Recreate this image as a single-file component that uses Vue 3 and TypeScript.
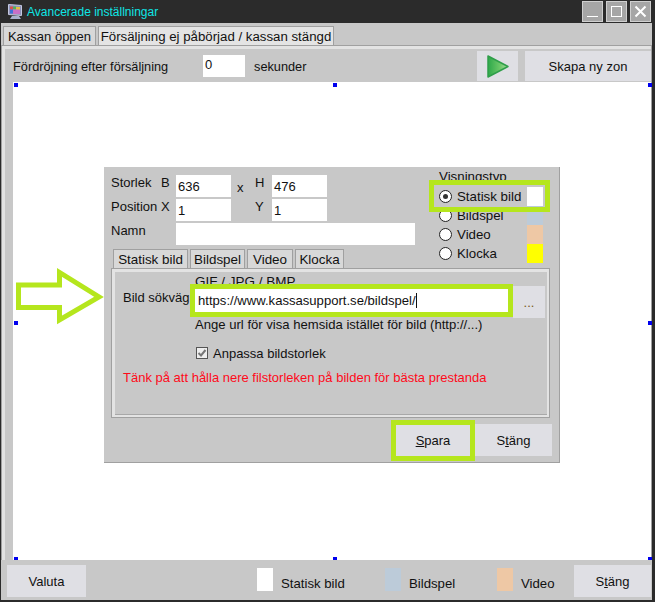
<script setup lang="ts">
interface Legend { label: string; color: string }
const legends: Legend[] = [
  { label: 'Statisk bild', color: '#ffffff' },
  { label: 'Bildspel', color: '#bccbd9' },
  { label: 'Video', color: '#eec8a5' },
];
const viewTypes = [
  { label: 'Statisk bild', color: '#ffffff', checked: true },
  { label: 'Bildspel', color: '#bccbd9', checked: false },
  { label: 'Video', color: '#eec8a5', checked: false },
  { label: 'Klocka', color: '#ffff00', checked: false },
];
const handles = ['tl', 'tc', 'tr', 'ml', 'mr', 'bl', 'bc', 'br'];
const innerTabs = ['Statisk bild', 'Bildspel', 'Video', 'Klocka'];
</script>

<template>
  <div class="window">
    <header class="titlebar">
      <svg class="appicon" width="14" height="15" viewBox="0 0 14 15">
        <path d="M0.5 0.5 L13.5 1.5 V11.5 L0.5 10.5 Z" fill="#8f93b8" stroke="#c4c8e0" />
        <rect x="2" y="2.5" width="3" height="3" fill="#d85050" />
        <rect x="5" y="2.5" width="3" height="3" fill="#50b060" />
        <rect x="8" y="3" width="4" height="3" fill="#e0c040" />
        <rect x="2" y="5.5" width="3" height="4" fill="#4070d8" />
        <rect x="5" y="5.5" width="7" height="4.5" fill="#c870c8" />
        <path d="M2 15 L4 12 H11 L13 15 Z" fill="#a8b0cc" />
      </svg>
      <span class="title">Avancerade inställningar</span>
      <div class="winbtns">
        <button class="winbtn"><svg width="21" height="21" viewBox="0 0 21 21"><rect x="5" y="15" width="11" height="1" fill="#fff" /></svg></button>
        <button class="winbtn"><svg width="21" height="21" viewBox="0 0 21 21"><rect x="5.5" y="5.5" width="10" height="10" fill="none" stroke="#fff" /></svg></button>
        <button class="winbtn"><svg width="21" height="21" viewBox="0 0 21 21"><path d="M5.5 5.5 L15.5 15.5 M15.5 5.5 L5.5 15.5" stroke="#fff" stroke-width="2" /></svg></button>
      </div>
    </header>

    <nav class="tabs">
      <span class="tab small">Kassan öppen</span>
      <span class="tab wide">Försäljning ej påbörjad / kassan stängd</span>
    </nav>

    <section class="body">
      <div class="toolbar">
        <span class="delay-label">Fördröjning efter försäljning</span>
        <span class="delay-input">0</span>
        <span class="delay-unit">sekunder</span>
        <button class="btn play">
          <svg width="24" height="25" viewBox="0 0 24 25">
            <defs>
              <linearGradient id="pg" x1="0" y1="0" x2="1" y2="0">
                <stop offset="0" stop-color="#2ea84a" />
                <stop offset="0.6" stop-color="#6cc868" />
                <stop offset="1" stop-color="#a6d8a0" />
              </linearGradient>
            </defs>
            <path d="M2 2 L22 12.5 L2 23 Z" fill="url(#pg)" stroke="#2f9e4a" stroke-width="1.5" stroke-linejoin="round" />
          </svg>
        </button>
        <button class="btn create">Skapa ny zon</button>
      </div>

      <div class="canvas">
        <i v-for="h in handles" :key="h" class="handle" :class="h"></i>

        <svg class="arrow" width="92" height="60" viewBox="0 0 92 60">
          <path d="M5.5 19 H46.5 V6.5 L86 31 L46.5 54 V41.5 H5.5 Z" fill="none" stroke="#b5e61d" stroke-width="5" />
        </svg>

        <div class="dialog">
          <div class="top">
            <div class="fields">
              <span class="lbl">Storlek</span><span class="lbl">B</span><span class="inp">636</span><span class="xmark">x</span><span class="lbl">H</span><span class="inp">476</span>
              <span class="lbl">Position</span><span class="lbl">X</span><span class="inp">1</span><span></span><span class="lbl">Y</span><span class="inp">1</span>
              <span class="namn lbl">Namn</span><span class="inp namn-inp"></span>
            </div>
            <div class="vis">
              <div class="vis-head">Visningstyp</div>
              <label v-for="v in viewTypes" :key="v.label" class="vis-row" :class="{ marked: v.checked }">
                <span class="radio" :class="{ on: v.checked }"></span>
                <span class="vis-label">{{ v.label }}</span>
                <span class="swatch" :style="{ background: v.color }"></span>
              </label>
            </div>
          </div>

          <div class="inner-tabs">
            <span v-for="t in innerTabs" :key="t" class="itab">{{ t }}</span>
          </div>

          <div class="panel">
            <div class="panel-in">
              <div class="gif">GIF / JPG / BMP</div>
              <div class="path-row">
                <span class="path-label">Bild sökväg</span>
                <div class="path-hl"><div class="path-input">https://www.kassasupport.se/bildspel/<i class="caret"></i></div></div>
                <button class="btn dots">...</button>
              </div>
              <div class="hint">Ange url för visa hemsida istället för bild (http://...)</div>
              <label class="check-row">
                <svg width="12" height="12" viewBox="0 0 12 12"><rect x="0.5" y="0.5" width="11" height="11" fill="#eee" stroke="#555" /><path d="M2.5 6 L5 8.5 L9.5 3" fill="none" stroke="#777" stroke-width="2" /></svg>
                <span>Anpassa bildstorlek</span>
              </label>
              <div class="warn">Tänk på att hålla nere filstorleken på bilden för bästa prestanda</div>
            </div>
          </div>

          <div class="dlg-actions">
            <button class="btn save"><u>S</u>para</button>
            <button class="btn close">S<u>t</u>äng</button>
          </div>
        </div>
      </div>
    </section>

    <footer class="footer">
      <button class="btn valuta">Valuta</button>
      <div class="legend">
        <div v-for="l in legends" :key="l.label" class="legend-item">
          <span class="legend-swatch" :style="{ background: l.color }"></span>
          <span class="legend-label">{{ l.label }}</span>
        </div>
      </div>
      <button class="btn foot-close">S<u>t</u>äng</button>
    </footer>
  </div>
</template>

<style>
html, body { margin: 0; padding: 0; background: #2b2b2b; }
</style>

<style scoped>
.window {
  width: 655px;
  height: 602px;
  display: flex;
  flex-direction: column;
  background: #c8c8c8;
  font-family: "Liberation Sans", Arial, sans-serif;
  font-size: 12px;
  color: #111;
  overflow: hidden;
  position: relative;
  box-sizing: border-box;
  border-left: 1px solid #2b2b2b;
  border-right: 3px solid #2b2b2b;
  border-bottom: 2px solid #2b2b2b;
}
.titlebar {
  height: 23px;
  flex: none;
  background: #2b2b2b;
  display: flex;
  align-items: center;
  padding: 0 1px 0 7px;
}
.appicon { margin-right: 5px; }
.title { color: #0ee6e6; font-size: 12px; }
.winbtns { margin-left: auto; display: flex; gap: 3px; }
.winbtn {
  width: 21px;
  height: 21px;
  padding: 0;
  box-sizing: border-box;
  background: #a6a6a6;
  border: 1px solid #cfcfcf;
  display: block;
}
.winbtn svg { display: block; margin: -1px; }
.tabs {
  height: 22px;
  flex: none;
  display: flex;
  align-items: flex-end;
  padding-left: 2px;
  gap: 2px;
}
.tab {
  box-sizing: border-box;
  height: 19px;
  display: flex;
  align-items: center;
  justify-content: center;
  border: 1px solid #a0a0a0;
  border-bottom: 0;
  background: #d8d8d8;
  font-size: 13px;
  white-space: nowrap;
}
.tab.small { width: 93px; }
.tab.wide { width: 236px; background: #e4e4e4; font-size: 13.25px; }
.body {
  flex: 1;
  min-height: 0;
  display: flex;
  flex-direction: column;
  box-sizing: border-box;
  border: 1px solid #a0a0a0;
  border-bottom: 0;
  box-shadow: inset 0 3px 0 #e3e3e3, inset 3px 0 0 #e3e3e3;
}
.toolbar {
  height: 36px;
  flex: none;
  display: flex;
  align-items: center;
  padding-left: 11px;
  padding-top: 4px;
  box-sizing: border-box;
}
.delay-label { width: 190px; font-size: 12.75px; }
.delay-input {
  width: 42px;
  height: 22px;
  background: #fff;
  box-sizing: border-box;
  padding: 2px 0 0 2px;
  font-size: 13px;
  margin-right: 9px;
}
.delay-unit { font-size: 12.75px; }
.btn {
  border: 0;
  padding: 0;
  background: #dfdfe4;
  font-family: inherit;
  font-size: 13px;
  color: #111;
  flex: none;
}
.play {
  margin-left: auto;
  width: 41px;
  height: 30px;
  display: flex;
  align-items: center;
  justify-content: center;
}
.create { width: 126px; height: 30px; margin-left: 7px; }
.canvas {
  flex: 1;
  position: relative;
  background: #fff;
  margin-left: 11px;
}
.handle { position: absolute; width: 4px; height: 4px; background: #0000ee; z-index: 1; }
.tl { left: 1px; top: 1px; }
.tc { left: 320px; top: 1px; }
.tr { right: -1px; top: 1px; }
.ml { left: 1px; top: 239px; }
.mr { right: -1px; top: 239px; }
.bl { left: 1px; bottom: 0; height: 3px; }
.bc { left: 320px; bottom: 0; height: 3px; }
.br { right: -1px; bottom: 0; height: 3px; }
.arrow { position: absolute; left: 0; top: 184px; z-index: 3; }
.dialog {
  position: absolute;
  left: 91px;
  top: 85px;
  width: 456px;
  height: 296px;
  box-sizing: border-box;
  background: #c8c8c8;
  border-right: 1px solid #a0a0a0;
  border-bottom: 1px solid #a0a0a0;
  display: flex;
  flex-direction: column;
}
.top {
  height: 82px;
  flex: none;
  display: flex;
  font-size: 13px;
}
.fields {
  margin: 8px 0 0 7px;
  width: 304px;
  display: grid;
  grid-template-columns: 50px 15px 55px 24px 17px 55px;
  grid-auto-rows: 22px;
  row-gap: 2px;
  line-height: 15px;
}
.lbl { padding-top: 0; }
.inp { background: #fff; padding: 3px 0 0 2px; box-sizing: border-box; line-height: 18px; }
.xmark { padding: 5px 0 0 6px; }
.namn { grid-column: 1 / span 2; }
.namn-inp { grid-column: 3 / span 4; width: 239px; }
.vis { margin: 3px 0 0 24px; width: 104px; position: relative; font-size: 13.3px; }
.vis-head { height: 17px; line-height: 13px; }
.vis-row { display: flex; align-items: center; height: 19px; position: relative; }
.vis-row.marked { z-index: 2; }
.vis-row.marked::after {
  content: "";
  position: absolute;
  left: -10px;
  right: -7px;
  top: -7px;
  bottom: -6px;
  border: 5px solid #b5e61d;
  pointer-events: none;
}
.radio {
  width: 13px;
  height: 13px;
  box-sizing: border-box;
  border-radius: 50%;
  border: 1px solid #222;
  background: #fff;
  position: relative;
  margin-right: 5px;
}
.radio.on::after {
  content: "";
  position: absolute;
  left: 3px;
  top: 3px;
  width: 5px;
  height: 5px;
  border-radius: 50%;
  background: #333;
}
.vis-label { flex: 1; }
.swatch { width: 16px; align-self: stretch; }
.inner-tabs {
  display: grid;
  grid-template-columns: 75px 55px 46px 49px;
  height: 19px;
  flex: none;
  margin-left: 9px;
  gap: 2px;
}
.itab {
  box-sizing: border-box;
  height: 19px;
  border: 1px solid #a0a0a0;
  border-bottom: 0;
  background: #d8d8d8;
  display: flex;
  align-items: center;
  justify-content: center;
  font-size: 13.4px;
  white-space: nowrap;
}
.panel {
  margin-left: 7px;
  width: 439px;
  height: 150px;
  box-sizing: border-box;
  flex: none;
  border: 1px solid #a0a0a0;
  background: #e3e3e3;
  padding: 3px 2px 2px 3px;
}
.panel-in {
  height: 100%;
  box-sizing: border-box;
  background: #c8c8c8;
  padding-left: 8px;
  font-size: 13px;
  border-bottom: 1px solid #a8a8a8;
}
.gif { height: 12px; line-height: 20px; margin-left: 72px; font-size: 13.5px; }
.path-row { display: flex; align-items: flex-start; position: relative; }
.path-label { width: 67px; line-height: 28px; }
.path-hl {
  width: 323px;
  height: 33px;
  box-sizing: border-box;
  border: 5px solid #b5e61d;
  background: #fff;
  position: relative;
  z-index: 1;
}
.path-input { line-height: 24px; padding-left: 3px; white-space: nowrap; font-size: 13.1px; }
.caret { display: inline-block; width: 1px; height: 15px; background: #111; vertical-align: -3px; }
.dots { width: 32px; height: 32px; margin-top: 2px; color: #7a5a20; }
.hint { margin: -1px 0 0 72px; line-height: 16px; font-size: 13.1px; }
.check-row { display: flex; align-items: center; gap: 5px; margin: 13px 0 0 73px; height: 14px; }
.warn { color: #ff0a1a; margin-top: 10px; line-height: 16px; }
.dlg-actions {
  display: flex;
  justify-content: flex-end;
  align-items: flex-start;
  padding-right: 7px;
  margin-top: 2px;
}
.save {
  width: 84px;
  height: 41px;
  box-sizing: border-box;
  border: 5px solid #b5e61d;
}
.close { width: 77px; height: 32px; margin-top: 4px; }
.footer {
  height: 40px;
  flex: none;
  display: flex;
  align-items: flex-start;
  padding: 5px 1px 0 6px;
  box-sizing: border-box;
}
.valuta { width: 79px; height: 32px; }
.legend { display: flex; margin-left: 171px; margin-top: 3px; flex: none; }
.legend-item { display: flex; height: 23px; flex: none; }
.legend-item:nth-child(1) { width: 128px; }
.legend-item:nth-child(2) { width: 112px; }
.legend-item:nth-child(3) { width: 70px; }
.legend-swatch { width: 16px; height: 23px; margin-right: 8px; }
.legend-label { font-size: 13.2px; line-height: 16px; margin-top: 8px; }
.foot-close { width: 77px; height: 32px; margin-left: auto; }
</style>
